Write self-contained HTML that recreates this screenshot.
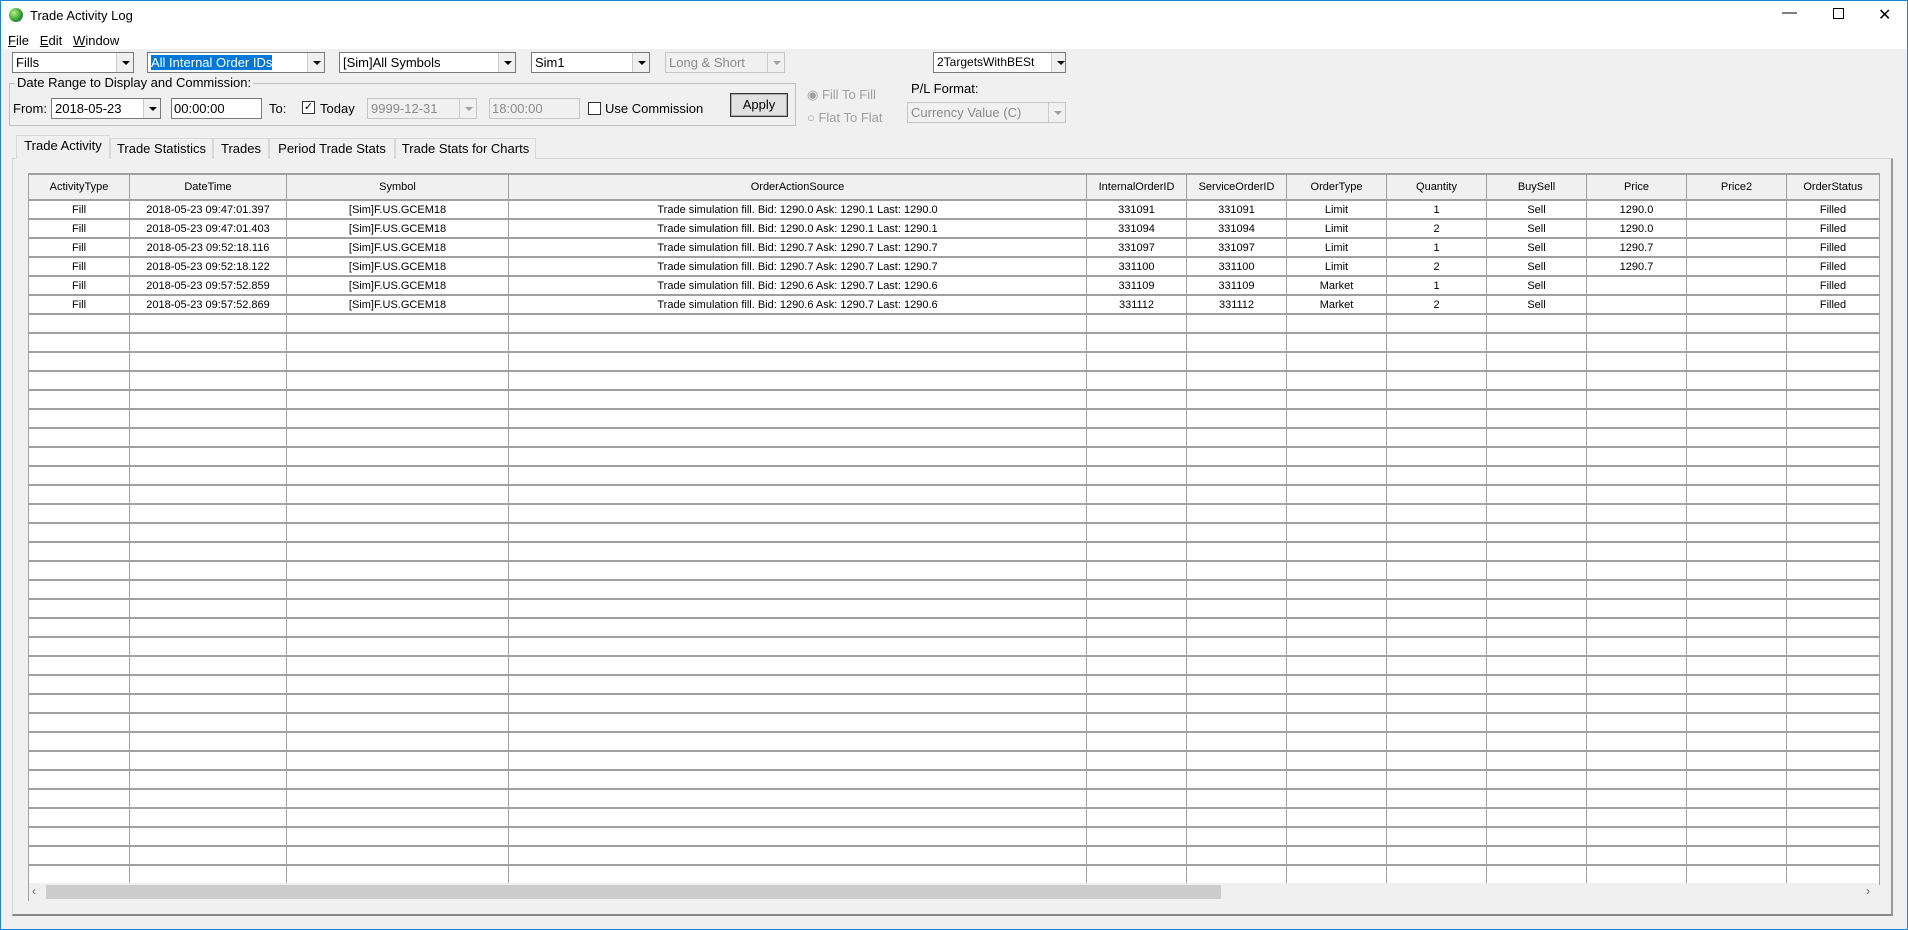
<!DOCTYPE html>
<html><head><meta charset="utf-8"><style>
*{box-sizing:border-box;margin:0;padding:0}
body{width:1908px;height:930px;position:relative;background:#f0f0f0;font-family:"Liberation Sans",sans-serif;font-size:13px;color:#000;overflow:hidden}
.a{position:absolute}
.win{left:0;top:0;width:1908px;height:930px;border:1px solid #1883d7}
.title{left:1px;top:1px;width:1906px;height:48px;background:#fff}
.combo{position:absolute;height:21px;background:#fff;border:1px solid #7a7a7a;font-size:13px;line-height:19px;padding-left:3px;white-space:nowrap;overflow:hidden}
.combo .btn{position:absolute;right:0;top:0;width:17px;height:19px;background:#f0f0f0;border-left:1px solid #ccc}
.combo .btn:after{content:"";position:absolute;left:5px;top:8px;border-left:4px solid transparent;border-right:4px solid transparent;border-top:4px solid #000}
.dis{background:#f0f0f0;color:#8a8a8a;border-color:#c6c6c6}
.dis .btn:after{border-top-color:#a0a0a0}
.edit{position:absolute;height:21px;background:#fff;border:1px solid #7a7a7a;line-height:19px;padding-left:2px}
.cb{position:absolute;width:13px;height:13px;border:1px solid #333;background:#fff}
.tab{position:absolute;top:138px;height:21px;border:1px solid #d9d9d9;border-bottom:none;background:#f0f0f0;line-height:19px;text-align:center;font-size:13px}
table{position:absolute;left:28px;top:173px;border-collapse:collapse;table-layout:fixed;font-size:11px}
td,th{border:1px solid #a0a0a0;border-top-width:2px;height:19px;text-align:center;white-space:nowrap;overflow:hidden;font-weight:normal;padding:0}
th{height:26px;background:#f0f0f0;border-top:2px solid #a0a0a0}
td{background:#fff}
</style></head><body>
<div class="a win"></div>
<div class="a title"></div>
<div class="a" style="left:9px;top:8px;width:14px;height:14px;border-radius:50%;background:radial-gradient(circle at 35% 35%,#b8f080,#2e9a2e 60%,#1a5a8a)"></div>
<div class="a" style="left:30px;top:8px;font-size:13px">Trade Activity Log</div>
<div class="a" style="left:1782px;top:4px;font-size:15px">&#8212;</div>
<div class="a" style="left:1833px;top:8px;width:11px;height:11px;border:1px solid #000"></div>
<div class="a" style="left:1878px;top:5px;font-size:16px">✕</div>
<div class="a" style="left:8px;top:33px;font-size:13px"><u>F</u>ile&nbsp;&nbsp; <u>E</u>dit&nbsp;&nbsp; <u>W</u>indow</div>

<div class="combo" style="left:12px;top:52px;width:122px">Fills<div class="btn"></div></div>
<div class="combo" style="left:147px;top:52px;width:178px"><span style="background:#0078d7;color:#fff">All Internal Order IDs</span><div class="btn"></div></div>
<div class="combo" style="left:339px;top:52px;width:177px">[Sim]All Symbols<div class="btn"></div></div>
<div class="combo" style="left:531px;top:52px;width:119px">Sim1<div class="btn"></div></div>
<div class="combo dis" style="left:665px;top:52px;width:120px">Long &amp; Short<div class="btn"></div></div>
<div class="combo" style="left:933px;top:52px;width:133px;font-size:12px">2TargetsWithBESt<div class="btn" style="width:14px"></div></div>

<div class="a" style="left:9px;top:83px;width:787px;height:43px;border:1px solid #c0c0c0"></div>
<div class="a" style="left:15px;top:75px;background:#f0f0f0;padding:0 2px">Date Range to Display and Commission:</div>
<div class="a" style="left:13px;top:101px">From:</div>
<div class="combo" style="left:51px;top:98px;width:110px">2018-05-23<div class="btn"></div></div>
<div class="edit" style="left:171px;top:98px;width:91px">00:00:00</div>
<div class="a" style="left:269px;top:101px">To:</div>
<div class="cb" style="left:302px;top:101px;font-size:11px;line-height:11px;text-align:center">✓</div>
<div class="a" style="left:320px;top:101px">Today</div>
<div class="combo dis" style="left:367px;top:98px;width:110px">9999-12-31<div class="btn"></div></div>
<div class="edit dis" style="left:489px;top:98px;width:91px;color:#8a8a8a;background:#f0f0f0;border-color:#c6c6c6">18:00:00</div>
<div class="cb" style="left:588px;top:102px"></div>
<div class="a" style="left:605px;top:101px">Use Commission</div>
<div class="a" style="left:730px;top:93px;width:58px;height:24px;border:1px solid #333;box-shadow:inset 0 0 0 1px #adadad;background:#e1e1e1;text-align:center;line-height:22px">Apply</div>
<div class="a" style="left:807px;top:87px;color:#a0a0a0">◉ Fill To Fill</div>
<div class="a" style="left:807px;top:110px;color:#a0a0a0">○ Flat To Flat</div>
<div class="a" style="left:911px;top:81px">P/L Format:</div>
<div class="combo dis" style="left:907px;top:102px;width:159px">Currency Value (C)<div class="btn"></div></div>

<div class="a" style="left:12px;top:158px;width:1881px;height:758px;border:1px solid #d9d9d9;border-bottom:2px solid #888;border-right:2px solid #999;background:#f0f0f0"></div>
<div class="tab" style="left:16px;top:135px;width:94px;height:24px;background:#f0f0f0;z-index:2">Trade Activity</div>
<div class="tab" style="left:110px;width:103px">Trade Statistics</div>
<div class="tab" style="left:213px;width:56px">Trades</div>
<div class="tab" style="left:269px;width:126px">Period Trade Stats</div>
<div class="tab" style="left:395px;width:141px">Trade Stats for Charts</div>

<table>
<colgroup><col style="width:101px"><col style="width:157px"><col style="width:222px"><col style="width:578px"><col style="width:100px"><col style="width:100px"><col style="width:100px"><col style="width:100px"><col style="width:100px"><col style="width:100px"><col style="width:100px"><col style="width:93px"></colgroup>
<tr><th>ActivityType</th><th>DateTime</th><th>Symbol</th><th>OrderActionSource</th><th>InternalOrderID</th><th>ServiceOrderID</th><th>OrderType</th><th>Quantity</th><th>BuySell</th><th>Price</th><th>Price2</th><th>OrderStatus</th></tr>
<tr><td>Fill</td><td>2018-05-23 09:47:01.397</td><td>[Sim]F.US.GCEM18</td><td>Trade simulation fill. Bid: 1290.0 Ask: 1290.1 Last: 1290.0</td><td>331091</td><td>331091</td><td>Limit</td><td>1</td><td>Sell</td><td>1290.0</td><td></td><td>Filled</td></tr>
<tr><td>Fill</td><td>2018-05-23 09:47:01.403</td><td>[Sim]F.US.GCEM18</td><td>Trade simulation fill. Bid: 1290.0 Ask: 1290.1 Last: 1290.1</td><td>331094</td><td>331094</td><td>Limit</td><td>2</td><td>Sell</td><td>1290.0</td><td></td><td>Filled</td></tr>
<tr><td>Fill</td><td>2018-05-23 09:52:18.116</td><td>[Sim]F.US.GCEM18</td><td>Trade simulation fill. Bid: 1290.7 Ask: 1290.7 Last: 1290.7</td><td>331097</td><td>331097</td><td>Limit</td><td>1</td><td>Sell</td><td>1290.7</td><td></td><td>Filled</td></tr>
<tr><td>Fill</td><td>2018-05-23 09:52:18.122</td><td>[Sim]F.US.GCEM18</td><td>Trade simulation fill. Bid: 1290.7 Ask: 1290.7 Last: 1290.7</td><td>331100</td><td>331100</td><td>Limit</td><td>2</td><td>Sell</td><td>1290.7</td><td></td><td>Filled</td></tr>
<tr><td>Fill</td><td>2018-05-23 09:57:52.859</td><td>[Sim]F.US.GCEM18</td><td>Trade simulation fill. Bid: 1290.6 Ask: 1290.7 Last: 1290.6</td><td>331109</td><td>331109</td><td>Market</td><td>1</td><td>Sell</td><td></td><td></td><td>Filled</td></tr>
<tr><td>Fill</td><td>2018-05-23 09:57:52.869</td><td>[Sim]F.US.GCEM18</td><td>Trade simulation fill. Bid: 1290.6 Ask: 1290.7 Last: 1290.6</td><td>331112</td><td>331112</td><td>Market</td><td>2</td><td>Sell</td><td></td><td></td><td>Filled</td></tr>
<tr><td></td><td></td><td></td><td></td><td></td><td></td><td></td><td></td><td></td><td></td><td></td><td></td></tr>
<tr><td></td><td></td><td></td><td></td><td></td><td></td><td></td><td></td><td></td><td></td><td></td><td></td></tr>
<tr><td></td><td></td><td></td><td></td><td></td><td></td><td></td><td></td><td></td><td></td><td></td><td></td></tr>
<tr><td></td><td></td><td></td><td></td><td></td><td></td><td></td><td></td><td></td><td></td><td></td><td></td></tr>
<tr><td></td><td></td><td></td><td></td><td></td><td></td><td></td><td></td><td></td><td></td><td></td><td></td></tr>
<tr><td></td><td></td><td></td><td></td><td></td><td></td><td></td><td></td><td></td><td></td><td></td><td></td></tr>
<tr><td></td><td></td><td></td><td></td><td></td><td></td><td></td><td></td><td></td><td></td><td></td><td></td></tr>
<tr><td></td><td></td><td></td><td></td><td></td><td></td><td></td><td></td><td></td><td></td><td></td><td></td></tr>
<tr><td></td><td></td><td></td><td></td><td></td><td></td><td></td><td></td><td></td><td></td><td></td><td></td></tr>
<tr><td></td><td></td><td></td><td></td><td></td><td></td><td></td><td></td><td></td><td></td><td></td><td></td></tr>
<tr><td></td><td></td><td></td><td></td><td></td><td></td><td></td><td></td><td></td><td></td><td></td><td></td></tr>
<tr><td></td><td></td><td></td><td></td><td></td><td></td><td></td><td></td><td></td><td></td><td></td><td></td></tr>
<tr><td></td><td></td><td></td><td></td><td></td><td></td><td></td><td></td><td></td><td></td><td></td><td></td></tr>
<tr><td></td><td></td><td></td><td></td><td></td><td></td><td></td><td></td><td></td><td></td><td></td><td></td></tr>
<tr><td></td><td></td><td></td><td></td><td></td><td></td><td></td><td></td><td></td><td></td><td></td><td></td></tr>
<tr><td></td><td></td><td></td><td></td><td></td><td></td><td></td><td></td><td></td><td></td><td></td><td></td></tr>
<tr><td></td><td></td><td></td><td></td><td></td><td></td><td></td><td></td><td></td><td></td><td></td><td></td></tr>
<tr><td></td><td></td><td></td><td></td><td></td><td></td><td></td><td></td><td></td><td></td><td></td><td></td></tr>
<tr><td></td><td></td><td></td><td></td><td></td><td></td><td></td><td></td><td></td><td></td><td></td><td></td></tr>
<tr><td></td><td></td><td></td><td></td><td></td><td></td><td></td><td></td><td></td><td></td><td></td><td></td></tr>
<tr><td></td><td></td><td></td><td></td><td></td><td></td><td></td><td></td><td></td><td></td><td></td><td></td></tr>
<tr><td></td><td></td><td></td><td></td><td></td><td></td><td></td><td></td><td></td><td></td><td></td><td></td></tr>
<tr><td></td><td></td><td></td><td></td><td></td><td></td><td></td><td></td><td></td><td></td><td></td><td></td></tr>
<tr><td></td><td></td><td></td><td></td><td></td><td></td><td></td><td></td><td></td><td></td><td></td><td></td></tr>
<tr><td></td><td></td><td></td><td></td><td></td><td></td><td></td><td></td><td></td><td></td><td></td><td></td></tr>
<tr><td></td><td></td><td></td><td></td><td></td><td></td><td></td><td></td><td></td><td></td><td></td><td></td></tr>
<tr><td></td><td></td><td></td><td></td><td></td><td></td><td></td><td></td><td></td><td></td><td></td><td></td></tr>
<tr><td></td><td></td><td></td><td></td><td></td><td></td><td></td><td></td><td></td><td></td><td></td><td></td></tr>
<tr><td></td><td></td><td></td><td></td><td></td><td></td><td></td><td></td><td></td><td></td><td></td><td></td></tr>
<tr><td></td><td></td><td></td><td></td><td></td><td></td><td></td><td></td><td></td><td></td><td></td><td></td></tr>
</table>
<div class="a" style="left:28px;top:883px;width:1851px;height:18px;background:#f0f0f0;border-left:1px solid #a0a0a0"></div>
<div class="a" style="left:46px;top:885px;width:1175px;height:14px;background:#cdcdcd"></div>
<div class="a" style="left:32px;top:884px;font-size:12px;color:#606060">‹</div>
<div class="a" style="left:1866px;top:884px;font-size:12px;color:#606060">›</div>
</body></html>
